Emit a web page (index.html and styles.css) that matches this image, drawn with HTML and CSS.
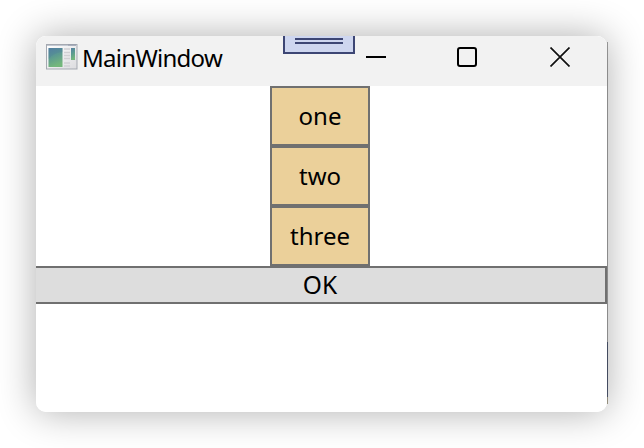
FILE: index.html
```html
<!DOCTYPE html>
<html lang="en">
<head>
<meta charset="utf-8">
<title>MainWindow</title>
<link rel="stylesheet" href="styles.css">
</head>
<body>
<main class="window">
  <header class="titlebar">
    <svg class="app-icon" width="32" height="26" viewBox="0 0 32 26">
      <defs>
        <linearGradient id="pane" x1="0" y1="0" x2="0.3" y2="1">
          <stop offset="0" stop-color="#5580a3"/>
          <stop offset="0.5" stop-color="#5c9a91"/>
          <stop offset="1" stop-color="#74b77c"/>
        </linearGradient>
        <linearGradient id="frame" x1="0" y1="0" x2="1" y2="1">
          <stop offset="0" stop-color="#ffffff"/>
          <stop offset="1" stop-color="#dcdcdf"/>
        </linearGradient>
      </defs>
      <rect x="0.5" y="0.5" width="30.5" height="24.5" fill="url(#frame)" stroke="#a5a9b1"/>
      <path d="M1 1.5h30" stroke="#c3c9d3"/>
      <path d="M22 1h8" stroke="#9198a8"/>
      <rect x="2.5" y="4" width="14" height="19" fill="url(#pane)"/>
      <path d="M2.5 15Q7 9 16.5 8V4h-14z" fill="#47769b" opacity=".25"/>
      <path d="M18 5h6M18 8.5h6M18 11.5h6M18 14.5h6M18 19h6M18 22h6" stroke="#d0d0d3" stroke-width="1.4"/>
      <rect x="25" y="4" width="4" height="12" fill="url(#pane)"/>
    </svg>
    <span class="title">MainWindow</span>
    <div class="controls">
      <svg width="20" height="20" viewBox="0 0 20 20"><path d="M0 10h20" stroke="#000" stroke-width="2"/></svg>
      <svg width="20" height="20" viewBox="0 0 20 20"><rect x="1" y="1" width="18" height="18" rx="2" fill="none" stroke="#000" stroke-width="2"/></svg>
      <svg width="20" height="20" viewBox="0 0 20 20"><path d="M.5.5l19 19M19.5.5l-19 19" stroke="#111" stroke-width="1.7"/></svg>
    </div>
    <div class="debug-tab"></div>
  </header>
  <section class="content">
    <div class="item">one</div>
    <div class="item">two</div>
    <div class="item">three</div>
    <button class="ok">OK</button>
  </section>
</main>
<div class="edge"></div>
</body>
</html>
```

FILE: styles.css
```css
* { box-sizing: border-box; }
body {
  margin: 0;
  width: 644px;
  height: 448px;
  padding: 36px;
  display: flex;
  overflow: hidden;
  background: #fff;
  color: #000;
  font-family: "Noto Sans", "Open Sans", sans-serif;
}
.window {
  position: relative;
  width: 571px;
  height: 376px;
  border-radius: 10px;
  overflow: hidden;
  background: #fff;
}
.window, .edge { flex: none; }
body::before {
  content: "";
  position: absolute;
  width: 571px;
  height: 376px;
  border-radius: 10px;
  box-shadow: 0 0 38px rgba(0, 0, 0, .32);
}
.edge {
  width: 1px;
  height: 362px;
  margin-top: 6px;
  background: linear-gradient(#a5a5a5 0 300px, #505971 300px 355px, #a6a08d 355px);
}
.titlebar {
  position: relative;
  display: flex;
  height: 50px;
  background: #f2f2f2;
}
.app-icon { margin: 8px 0 0 10px; }
.title {
  margin: 5px 0 0 4px;
  font-size: 24px;
  line-height: 34px;
  letter-spacing: -.72px;
}
.controls {
  display: flex;
  gap: 72px;
  margin: 11px 37px 0 auto;
}
.controls svg:nth-child(2) { margin-right: 1px; }
.controls svg:first-child { margin-right: -1px; }
.debug-tab {
  position: absolute;
  left: 247px;
  top: 0;
  width: 72px;
  height: 18px;
  border: 2px solid #3d4674;
  border-top: 0;
  background: #ced6ef;
}
.debug-tab::before {
  content: "";
  display: block;
  height: 2px;
  margin: 2px 10px 0;
  border: solid #3d4674;
  border-width: 2px 0;
}
.content {
  display: flex;
  flex-direction: column;
  align-items: center;
}
.item {
  width: 100px;
  height: 60px;
  margin-right: 3px;
  border: 2px solid #707070;
  background: #ebd09a;
  font-size: 24px;
  line-height: 56px;
  text-align: center;
}
.ok {
  width: 573px;
  height: 38px;
  margin-left: -2px;
  padding: 0 1px 0 0;
  border: 2px solid #707070;
  background: #ddd;
  color: #000;
  font: 24.5px/34px "Noto Sans", "Open Sans", sans-serif;
  text-align: center;
}
```
